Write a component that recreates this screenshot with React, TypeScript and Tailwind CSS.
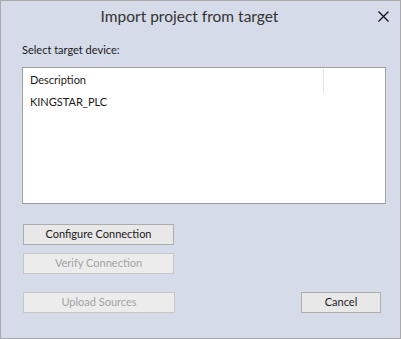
export default function App() {
  const font = { fontFamily: '"Segoe UI", Lato, "Noto Sans", sans-serif' };
  return (
    <div
      className="w-[401px] h-[339px] bg-[#d6dbe9] border border-[#a9a9a9] flex flex-col text-[11px] text-[#1a1a1a]"
      style={font}
    >
      {/* title bar */}
      <div className="relative h-[32px] flex items-center justify-center pr-[22px]">
        <span className="text-[15.5px] text-[#333333] leading-none">Import project from target</span>
        <button className="absolute right-[9px] top-[7px] w-[16px] h-[16px] flex items-center justify-center" aria-label="Close">
          <svg width="11" height="11" viewBox="0 0 11 11">
            <path d="M0.5 0.5L10.5 10.5M10.5 0.5L0.5 10.5" stroke="#111" strokeWidth="1.3" />
          </svg>
        </button>
      </div>

      <div className="pl-[21px] pr-[19px] pt-[9px]">
        <div className="leading-[16px]">Select target device:</div>

        {/* device list */}
        <div className="mt-[9px] w-[364px] h-[137px] bg-white border border-[#a0a0a0]">
          <div className="flex h-[25px]">
            <div className="w-[300px] pl-[7px] flex items-center">Description</div>
            <div className="w-px h-[24px] mt-[1px] bg-[#e2e2e2]" />
          </div>
          <div className="pl-[7px] leading-[16px] mt-[1px]">KINGSTAR_PLC</div>
        </div>

        {/* actions */}
        <div className="mt-[20px] flex flex-col gap-[8px] w-[152px] pl-[1px]">
          <button className="h-[21px] bg-[#e8e8e8] border border-[#adadad] text-[#1a1a1a]">
            Configure Connection
          </button>
          <button disabled className="h-[21px] bg-[#ececec] border border-[#c6c6c6] text-[#a3a3a3]">
            Verify Connection
          </button>
        </div>
        <div className="mt-[18px] flex justify-between pl-[1px]">
          <button disabled className="w-[152px] h-[21px] bg-[#ececec] border border-[#c6c6c6] text-[#a3a3a3]">
            Upload Sources
          </button>
          <button className="w-[80px] h-[21px] bg-[#e8e8e8] border border-[#adadad] text-[#1a1a1a]">
            Cancel
          </button>
        </div>
      </div>
    </div>
  );
}
